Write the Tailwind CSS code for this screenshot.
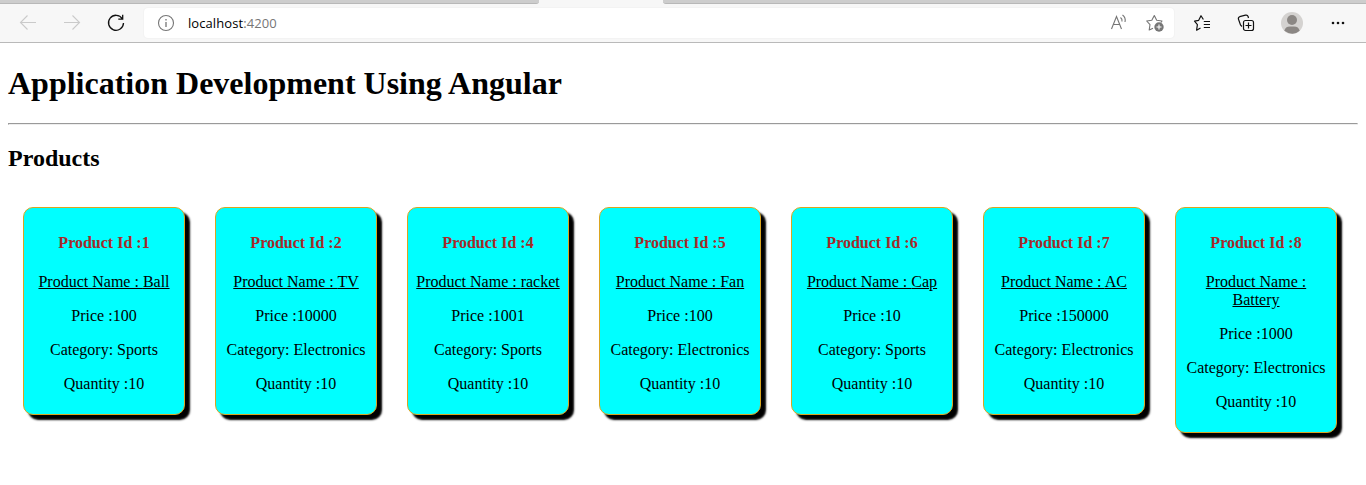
<!DOCTYPE html>
<html lang="en">
<head>
<meta charset="utf-8">
<title>localhost:4200</title>
<script src="https://cdn.jsdelivr.net/npm/@tailwindcss/browser@4"></script>
</head>
<body class="h-[485px] overflow-hidden bg-white font-['Liberation_Serif',serif] text-base leading-[18px] text-black">
<header class="h-[43px] border-b border-[#b9b9b9] bg-[#f7f7f7] font-['Open_Sans',sans-serif]">
  <div class="flex h-1 justify-between">
    <div class="w-[539px] rounded-br-[3px] border-b border-[#b8b8b8] bg-[#cdcdcd]"></div>
    <div class="w-[703px] rounded-bl-[3px] border-b border-[#b8b8b8] bg-[#cdcdcd]"></div>
  </div>
  <div class="mt-1 flex h-[30px] items-center">
    <svg class="ml-[18px] size-5" viewBox="0 0 20 20" fill="none" stroke="#cacaca" stroke-width="1.1"><path d="M18 9.500H2.500M9.500 2.500l-7 7 7 7"/></svg>
    <svg class="ml-6 size-5" viewBox="0 0 20 20" fill="none" stroke="#cacaca" stroke-width="1.1"><path d="M2 9.500h15.500M10.500 2.500l7 7-7 7"/></svg>
    <svg class="ml-6 size-5" viewBox="0 0 20 20" fill="none" stroke="#111" stroke-width="1.3"><path d="M16.300 5.700A7.500 7.500 0 1 0 17.500 10M16.700 1.800v4.400H12.300"/></svg>
    <div class="ml-[18px] flex h-[30px] w-[1030px] items-center rounded bg-white shadow-[0_0_2px_#0001]">
      <svg class="ml-3 size-5" viewBox="0 0 20 20" fill="none" stroke="#767676" stroke-width="1.1"><circle cx="10" cy="10" r="7.500"/><path d="M10 9v5M10 6v1.500" stroke-width="1.3"/></svg>
      <span class="ml-3 w-[90px] text-[13px] tracking-[0.08px] whitespace-nowrap">localhost<span class="text-[#767676]">:4200</span></span>
      <svg class="ml-[832px] size-5" viewBox="0 0 20 20" fill="none" stroke="#767676" stroke-width="1.1"><path d="M1.500 16 6.500 3.500l5 12.500M3.300 11.500h6.400M10.500 4.500q2 1.500 1.500 4M12.500 2q3.500 2.500 2.500 7"/></svg>
      <svg class="ml-[15px] size-5" viewBox="0 0 20 20" fill="none" stroke="#767676" stroke-width="1.1" stroke-linejoin="round"><path d="M8 15.200 4.200 17l.8-5.300L1.700 8l5.100-.8L9.300 2.500l2.400 4.700 5.300.8-1 1.500"/><circle cx="14" cy="14" r="4.700" fill="#767676" stroke="none"/><path d="M11.500 14h5M14 11.500v5" stroke="#fff"/></svg>
    </div>
    <svg class="ml-[18px] size-5" viewBox="0 0 20 20" fill="none" stroke="#111" stroke-width="1.2" stroke-linejoin="round"><path d="M8.500 15 4.600 17.200l.8-5.500L2.500 8.200l4.200-.9L9 2.700l2.400 3.800M11.800 8.500h6.200M11.800 11.500h6.200M11.800 14.500h6.200"/></svg>
    <svg class="ml-6 size-5" viewBox="0 0 20 20" fill="none" stroke="#111" stroke-width="1.2"><rect x="7.500" y="7.500" width="10" height="10" rx="2"/><path d="M12.500 9.500v6M9.500 12.500h6M6 13.500 4.500 12 2.500 6.300Q1.900 4.300 3.700 3.700L9.500 2.200q2-.5 2.600 1.300l.4 1.500"/></svg>
    <svg class="ml-6 size-6" viewBox="0 0 24 24"><circle cx="12" cy="12" r="11" fill="#d4d2d0"/><circle cx="12" cy="9" r="5" fill="#8b8784"/><path d="M4.300 19.800q1-4.300 5.700-4.300h4q4.700 0 5.700 4.300-7 6-15.400 0Z" fill="#8b8784"/></svg>
    <svg class="ml-6 size-5" viewBox="0 0 20 20" fill="#111"><circle cx="5" cy="10" r="1.300"/><circle cx="10" cy="10" r="1.300"/><circle cx="15" cy="10" r="1.300"/></svg>
  </div>
</header>
<main class="px-2">
  <h1 class="pt-[22px] text-[32px] leading-9 font-bold">Application Development Using Angular</h1>
  <hr class="mt-[22px] h-0.5 border border-t-[#9a9a9a] border-r-[#eeeeee] border-b-[#eeeeee] border-l-[#9a9a9a]">
  <h2 class="mt-5 text-2xl leading-[27px] font-bold">Products</h2>
  <section id="products" class="mt-[35px] ml-[15px] flex items-start gap-[30px]"></section>
</main>
<template id="card">
  <article class="w-[162px] shrink-0 rounded-[10px] border border-[#daa520] bg-[#00ffff] px-[5px] pt-[25.7px] pb-[21px] text-center shadow-[5px_5px_2px_black]">
    <h4 class="mb-[21.3px] font-bold text-[#a52a2a]">Product Id :<span data-k></span></h4>
    <p class="mb-4 underline">Product Name : <span data-k></span></p>
    <p class="mb-4">Price :<span data-k></span></p>
    <p class="mb-4 whitespace-nowrap">Category: <span data-k></span></p>
    <p>Quantity :<span data-k></span></p>
  </article>
</template>
<script>
const products = [
  [1, 'Ball', 100, 'Sports', 10],
  [2, 'TV', 10000, 'Electronics', 10],
  [4, 'racket', 1001, 'Sports', 10],
  [5, 'Fan', 100, 'Electronics', 10],
  [6, 'Cap', 10, 'Sports', 10],
  [7, 'AC', 150000, 'Electronics', 10],
  [8, 'Battery', 1000, 'Electronics', 10]
];
for (const p of products) {
  const c = document.getElementById('card').content.cloneNode(true);
  c.querySelectorAll('[data-k]').forEach((e, i) => e.textContent = p[i]);
  document.getElementById('products').append(c);
}
</script>
</body>
</html>
